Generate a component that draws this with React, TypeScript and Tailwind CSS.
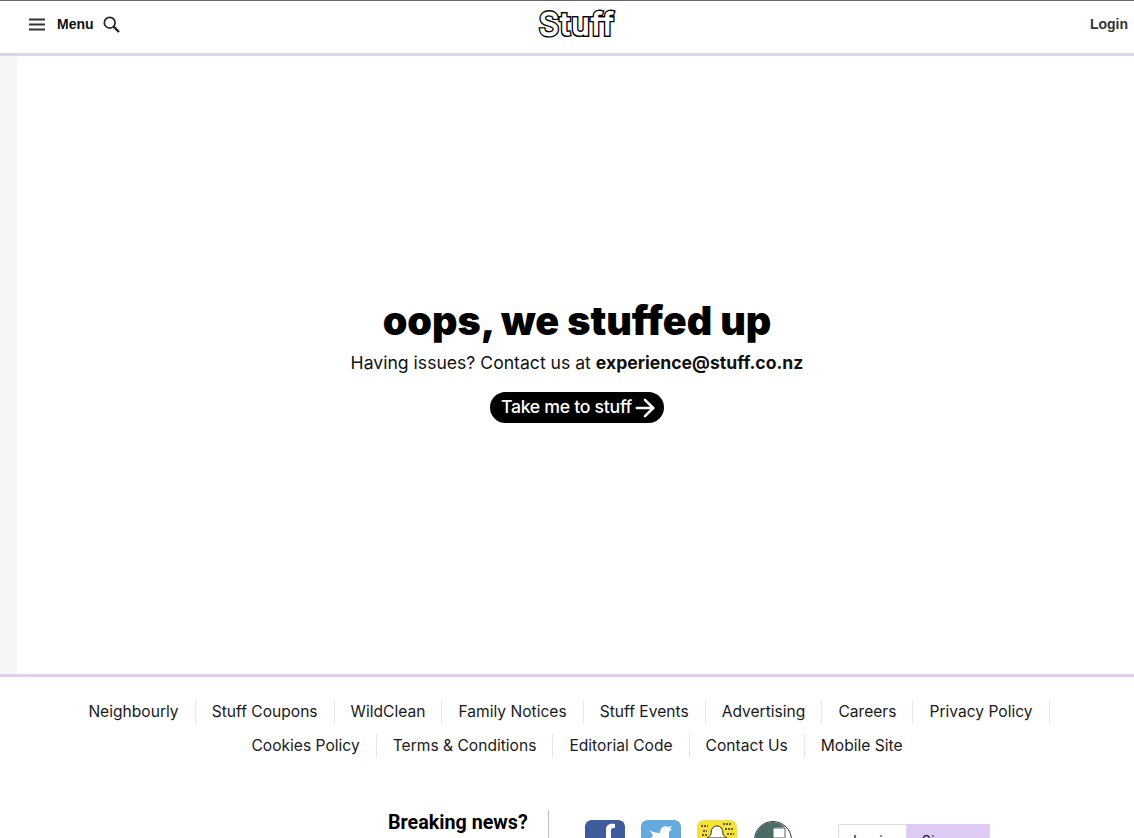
import { FC } from 'react';
import { ArrowRight } from 'lucide-react';

const ROW_ONE = [
  'Neighbourly',
  'Stuff Coupons',
  'WildClean',
  'Family Notices',
  'Stuff Events',
  'Advertising',
  'Careers',
  'Privacy Policy',
];
const ROW_TWO = ['Cookies Policy', 'Terms & Conditions', 'Editorial Code', 'Contact Us', 'Mobile Site'];

const Logo: FC = () => (
  <svg width="84" height="40" viewBox="0 0 84 40" fill="none" aria-label="Stuff">
    <text
      x="42"
      y="31"
      textAnchor="middle"
      fontFamily="Inter, sans-serif"
      fontSize="31"
      fontWeight="400"
      letterSpacing="1.2"
      stroke="#000"
      strokeWidth="4"
      fill="#000"
    >
      Stuff
    </text>
    <text
      x="42"
      y="31"
      textAnchor="middle"
      fontFamily="Inter, sans-serif"
      fontSize="31"
      fontWeight="400"
      letterSpacing="1.2"
      stroke="#fff"
      strokeWidth="1.2"
      fill="#fff"
      aria-hidden="true"
    >
      Stuff
    </text>
  </svg>
);

const Header: FC = () => (
  <header className="relative flex h-[56px] shrink-0 items-center justify-between border-t border-b-[3px] border-t-[#666] border-b-[#dfd0ee] pb-[5px] pl-[29px] pr-[6px] font-['Liberation_Sans',sans-serif] text-[14px] font-bold">
    <div className="flex items-center">
      <svg width="16" height="13" viewBox="0 0 16 13" fill="none" stroke="#333" strokeWidth="2">
        <path d="M0 1.5h16M0 6.5h16M0 11.5h16" />
      </svg>
      <span className="ml-[12px] text-[#111]">Menu</span>
      <svg className="ml-[9px]" width="17" height="17" viewBox="0 0 17 17" fill="none" stroke="#222">
        <circle cx="6.7" cy="6.7" r="5.4" strokeWidth="1.7" />
        <path d="M10.6 10.6L16 16" strokeWidth="2.4" />
      </svg>
    </div>
    <div className="absolute left-[535px] top-[3px]">
      <Logo />
    </div>
    <span className="text-[#333]">Login</span>
  </header>
);

const FooterRow: FC<{ items: string[]; lastDivider: boolean }> = ({ items, lastDivider }) => (
  <ul className={lastDivider ? 'flex h-[34px] items-center justify-center pr-[32px]' : 'flex h-[34px] items-center justify-center'}>
    {items.map((item, i) => (
      <li
        key={item}
        className={
          i < items.length - 1 || lastDivider
            ? 'flex h-[24px] items-center border-r border-[#e6e6e6] px-4'
            : 'flex h-[24px] items-center px-4'
        }
      >
        {item}
      </li>
    ))}
  </ul>
);

const SocialIcons: FC = () => (
  <div className="flex items-start gap-[16px]">
    <svg className="rounded-t-[6px]" width="40" height="18" viewBox="0 0 40 18">
      <rect width="40" height="30" rx="6" fill="#3f5c9c" />
      <path d="M21 18V10c0-5 3-7 9-6v4c-3-.4-4 .2-4 2.600V18z" fill="#fff" />
    </svg>
    <svg className="rounded-t-[6px]" width="40" height="18" viewBox="0 0 40 18">
      <rect width="40" height="30" rx="6" fill="#66a9de" />
      <path d="M8 10c3 2 7 3 11 3 0-5 4-8 8-6l4-1-2 3 2 0-3 3v6H10c3-2 2-4-2-8z" fill="#fff" />
    </svg>
    <svg className="rounded-t-[6px]" width="40" height="18" viewBox="0 0 40 18">
      <rect width="40" height="30" rx="6" fill="#f4e23a" />
      <path d="M4 6h7M26 4h8M28 9h8M6 11h4M30 14h7M5 15h5" stroke="#333" strokeWidth="1.500" strokeDasharray="2 1" />
      <path d="M10 18c2-1 3-2 4-4 0-5 2-8 6-8s6 3 6 8c1 2 2 3 4 4z" fill="#fff" stroke="#222" />
    </svg>
    <svg width="40" height="18" viewBox="0 0 40 18">
      <circle cx="20" cy="20" r="18.500" fill="#fff" stroke="#333" />
      <path d="M20 2a18 18 0 0 0-18 18h18z" fill="#4d6b66" />
      <path d="M20 2a18 18 0 0 1 12 5l-12 1z" fill="#4d6b66" />
      <path d="M20 8h12v10H20z" fill="#fff" stroke="#4d6b66" />
    </svg>
  </div>
);

const Footer: FC = () => (
  <footer className="shrink-0 border-t-[3px] border-[#dfd0ee] font-['Inter',sans-serif] text-[15.6px] text-[#1a1a1a]">
    <div className="pt-[18px] pl-[20px]">
      <FooterRow items={ROW_ONE} lastDivider />
      <FooterRow items={ROW_TWO} lastDivider={false} />
    </div>
    <div className="mt-[47px] flex items-start pl-[388px]">
      <div className="h-[60px] w-[161px] border-r border-[#bdbdbd] pt-[1px] font-['Roboto',sans-serif] text-[19.700px] font-bold leading-[24px] text-black">
        Breaking news?
      </div>
      <div className="ml-[36px] mt-[10px]">
        <SocialIcons />
      </div>
      <div className="ml-[45px] mt-[14px] flex h-[40px] text-[14px] tracking-[0.5px]">
        <div className="w-[69px] border border-[#ddd] pt-[5px] text-center">Login</div>
        <div className="w-[83px] bg-[#dfc9f5] pt-[6px] text-center">Sign up</div>
      </div>
    </div>
  </footer>
);

export default function App() {
  return (
    <div className="flex h-[838px] flex-col overflow-hidden bg-white">
      <Header />
      <main className="flex h-[618px] shrink-0">
        <div className="w-[17px] bg-[#f5f6f6]" />
        <div className="flex flex-1 flex-col items-center pt-[242px] pl-[3px] font-['Inter',sans-serif]">
          <h1 className="text-[39.500px] font-black leading-[46px] text-black">oops, we stuffed up</h1>
          <p className="mt-[7px] text-[17.600px] leading-[24px] text-[#111]">
            Having issues? Contact us at <strong className="font-bold">experience@stuff.co.nz</strong>
          </p>
          <a className="mt-[17px] flex h-[31px] items-center rounded-full bg-black pl-[11px] pr-[5px] text-[17.700px] font-medium tracking-[-0.3px] text-white">
            Take me to stuff
            <ArrowRight className="-ml-[1px]" size={28} strokeWidth={2.2} />
          </a>
        </div>
      </main>
      <Footer />
    </div>
  );
}
